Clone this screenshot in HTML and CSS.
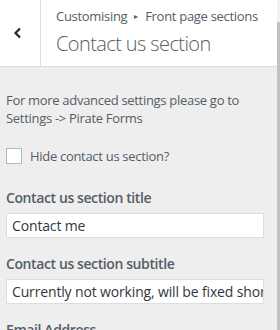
FILE: index.html
```html
<!DOCTYPE html>
<html>
<head>
<meta charset="utf-8">
<link rel="stylesheet" href="styles.css">
</head>
<body>
<div class="frame">
  <div class="panel">
    <header class="head">
      <button class="back" aria-label="Back">
        <svg width="10" height="12" viewBox="0 0 10 12"><path d="M7 1.5 L2.5 6 L7 10.5" fill="none" stroke="#23282d" stroke-width="2.2"/></svg>
      </button>
      <div class="titles">
        <div class="crumb">Customising <span class="tri">▸</span> Front page sections</div>
        <div class="title">Contact us section</div>
      </div>
    </header>
    <main class="body">
      <p class="desc">For more advanced settings please go to Settings -&gt; Pirate Forms</p>
      <label class="check"><span class="box"></span><span>Hide contact us section?</span></label>
      <div class="field">
        <div class="label">Contact us section title</div>
        <div class="input">Contact me</div>
      </div>
      <div class="field">
        <div class="label">Contact us section subtitle</div>
        <div class="input">Currently not working, will be fixed shortly</div>
      </div>
      <div class="field">
        <div class="label">Email Address</div>
      </div>
    </main>
  </div>
  <div class="scroll"><div class="thumb"></div></div>
</div>
</body>
</html>
```
FILE: styles.css
```css
html, body { margin: 0; padding: 0; }
body {
  width: 280px; height: 330px; overflow: hidden;
  background: #eee;
  font-family: "Open Sans", "Noto Sans", sans-serif;
  color: #555d66;
}
.frame { display: flex; height: 330px; }
.panel { width: 277px; flex: none; background: #eee; }
.scroll { width: 3px; flex: none; background: #f1f1f1; display: flex; flex-direction: column; }
.thumb { margin-top: 22px; flex: 1; background: #c1c1c1; }
.head {
  display: flex; height: 66px; background: #fff;
  border-bottom: 1px solid #ddd;
}
.back {
  width: 41px; flex: none; border: 0; border-right: 1px solid #ddd;
  background: #fff; padding: 0; margin: 0;
  display: flex; align-items: center; justify-content: center;
}
.back svg { display: block; margin-right: 4px; }
.titles { padding: 8px 0 0 15px; }
.crumb { font-size: 13px; line-height: 16px; color: #555d66; white-space: nowrap; letter-spacing: -0.3px; }
.tri { font-size: 8px; vertical-align: 2px; margin: 0 4px; }
.title { font-size: 20px; font-weight: 300; line-height: 26px; margin-top: 7px; color: #555d66; white-space: nowrap; letter-spacing: -0.6px; }
.body { padding: 25px 13px 0 6px; }
.desc { margin: 0; font-size: 13px; line-height: 17.5px; letter-spacing: -0.3px; }
.check { display: flex; align-items: center; gap: 8px; margin-top: 20px; font-size: 13px; letter-spacing: -0.3px; }
.box { width: 14px; height: 14px; border: 1px solid #b4b9be; background: #fff; }
.field { margin-top: 23px; }
.field + .field { margin-top: 16px; }
.label { font-size: 14px; font-weight: 600; line-height: 20px; margin-bottom: 5px; letter-spacing: -0.4px; }
.input {
  height: 23px; border: 1px solid #ddd; background: #fff;
  font-size: 14px; line-height: 23px; padding: 0 5px;
  color: #32373c; white-space: nowrap; overflow: hidden; letter-spacing: -0.15px;
}
```
